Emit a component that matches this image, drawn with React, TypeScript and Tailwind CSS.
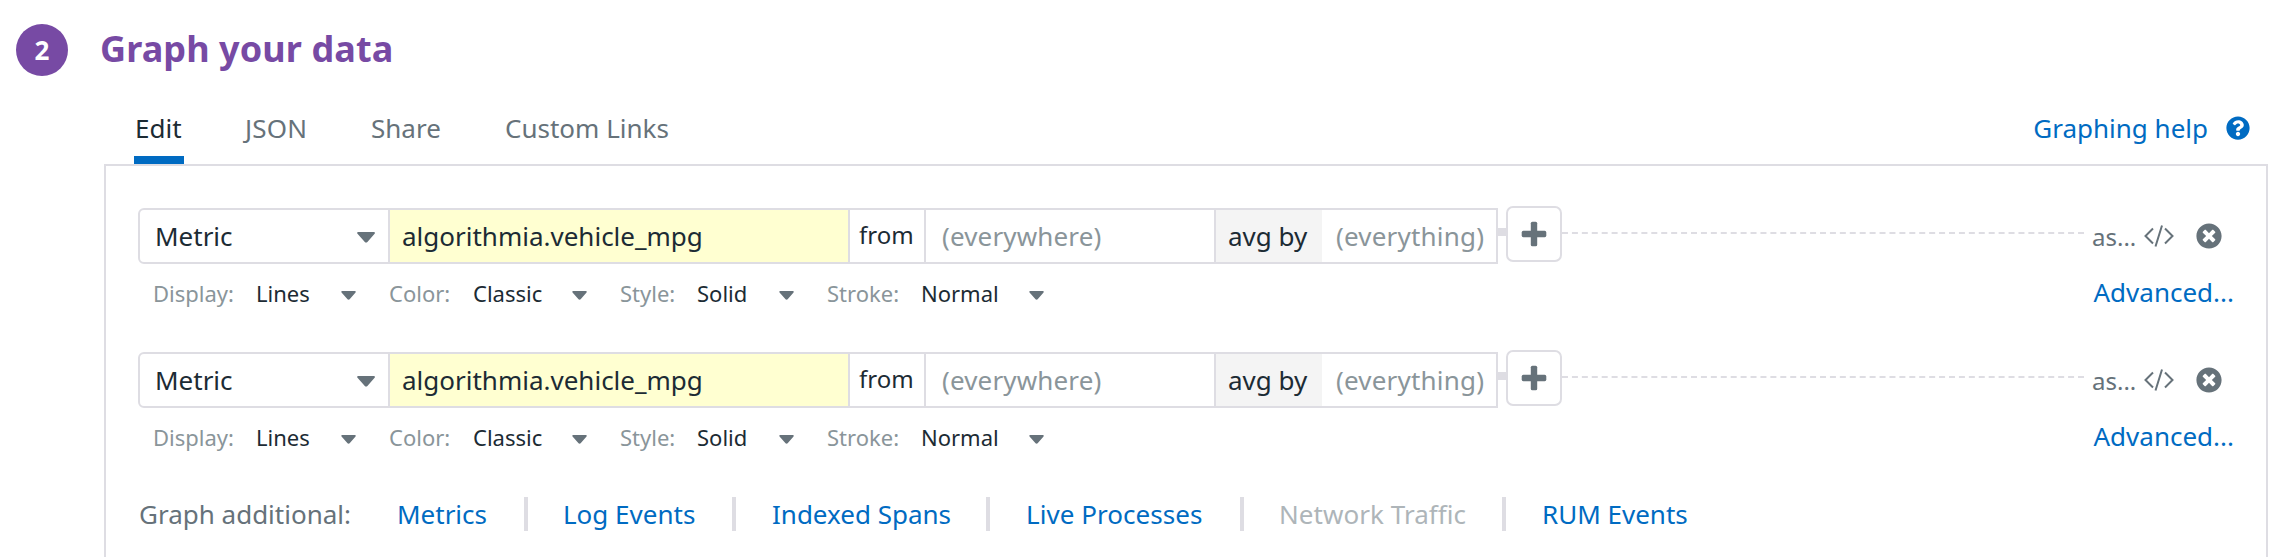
import { FaQuestionCircle, FaTimesCircle } from "react-icons/fa";

function Caret({ className }: { className: string }) {
  return (
    <svg viewBox="0 0 18 11" className={`shrink-0 text-[#66727a] ${className}`} fill="currentColor">
      <path d="M1.2 0h15.6c1 0 1.5 1.1.8 1.8l-7.2 8.2c-.7.8-1.9.8-2.6 0L.5 1.8C-.2 1.1.3 0 1.2 0z" />
    </svg>
  );
}

function Option({ label, value, labelClass, valueClass }: { label: string; value: string; labelClass: string; valueClass: string }) {
  return (
    <div className="flex items-center">
      <span className={`shrink-0 text-[#8a959a] ${labelClass}`}>{label}</span>
      <span className={`shrink-0 ${valueClass}`}>{value}</span>
      <Caret className="mt-[3px] h-[9px] w-[15px]" />
    </div>
  );
}

function Query() {
  return (
    <div className="h-[144px]">
      <div className="flex h-[58px] items-start">
        <div className="mt-[2px] flex h-[56px] w-[1360px] shrink-0 rounded-l-[6px] border-2 border-[#dedde3] leading-[52px]">
          <div className="flex w-[250px] shrink-0 items-center justify-between border-r-2 border-[#dedde3] pr-[13px] pl-[14px]">
            <span className="pl-px">Metric</span>
            <Caret className="mt-[2px] h-[11px] w-[18px]" />
          </div>
          <div className="w-[460px] shrink-0 border-r-2 border-[#dedde3] bg-[#ffffd1] pl-[12px]">algorithmia.vehicle_mpg</div>
          <div className="w-[76px] shrink-0 border-r-2 border-[#dedde3] pl-[9px] text-[24px] leading-[50px]">from</div>
          <div className="w-[290px] shrink-0 border-r-2 border-[#dedde3] pl-[16px] tracking-[0.15px] text-[#8a959a]">(everywhere)</div>
          <div className="w-[106px] shrink-0 bg-[#f4f4f4] pl-[12px]">avg by</div>
          <div className="pl-[14px] tracking-[0.2px] text-[#8a959a]">(everything)</div>
        </div>
        <div className="mt-[22px] h-[8px] w-[8px] shrink-0 bg-[#dedde3]" />
        <button className="flex h-[56px] w-[56px] shrink-0 items-center justify-center rounded-[7px] border-2 border-[#dedde3]">
          <svg viewBox="0 0 26 26" className="h-[26px] w-[26px]" fill="#66727a">
            <rect x="0.7" y="9.8" width="24.6" height="6.4" rx="1.6" />
            <rect x="9.8" y="0.7" width="6.4" height="24.6" rx="1.6" />
          </svg>
        </button>
        <div className="mt-[26px] w-[522px] shrink-0 border-t-2 border-dashed border-[#dedde3]" />
        <span className="ml-[8px] w-[52px] shrink-0 text-[24px] leading-[62px] text-[#66727a]">as...</span>
        <svg viewBox="0 0 30 22" className="mt-[19px] h-[22px] w-[30px] shrink-0" fill="none" stroke="#66727a" strokeWidth="2">
          <path d="M9 3.5 1.5 11 9 18.5M21 3.5l7.5 7.5-7.5 7.5M18 .5 11.5 21.5" />
        </svg>
        <FaTimesCircle className="mt-[17px] ml-[22px] h-[26px] w-[26px] shrink-0 text-[#66727a]" />
      </div>
      <div className="flex h-[57px] items-center justify-between pr-[32px] pl-[15px]">
        <div className="flex gap-[33px] pt-[2px] text-[22px]">
          <Option label="Display:" value="Lines" labelClass="w-[103px]" valueClass="w-[85px]" />
          <Option label="Color:" value="Classic" labelClass="w-[84px]" valueClass="w-[99px]" />
          <Option label="Style:" value="Solid" labelClass="w-[77px]" valueClass="w-[82px]" />
          <Option label="Stroke:" value="Normal" labelClass="w-[94px]" valueClass="w-[108px]" />
        </div>
        <a className="text-[#006bc2]">Advanced...</a>
      </div>
    </div>
  );
}

const sep = "h-[34px] w-[4px] shrink-0 bg-[#dedde3]";

export default function App() {
  return (
    <div className="h-[557px] w-[2290px] overflow-hidden bg-white font-['Noto_Sans',sans-serif] text-[26px] text-[#1c2b34]">
      <header className="flex h-[100px] items-center gap-[32px] pl-[16px]">
        <div className="flex h-[52px] w-[52px] items-center justify-center rounded-full bg-[#774aa4] text-[26px] font-bold text-white">2</div>
        <h1 className="pb-[3px] text-[36px] font-bold tracking-[0.1px] text-[#774aa4]">Graph your data</h1>
      </header>
      <nav className="ml-[104px] flex h-[64px] w-[2164px] items-start pl-[30px] leading-[56px] text-[#66727a]">
        <div className="h-[64px] w-[50px] shrink-0 border-b-8 border-[#006bc2] pl-px text-[#1c2b34]">Edit</div>
        <div className="w-[127px] shrink-0 pl-[61px] tracking-[0.2px]">JSON</div>
        <div className="ml-[60px] w-[134px] shrink-0">Share</div>
        <div className="grow">Custom Links</div>
        <div className="flex items-center text-[#006bc2]">
          <span>Graphing help</span>
          <FaQuestionCircle className="mr-[18px] ml-[18px] h-[24px] w-[24px]" />
        </div>
      </nav>
      <main className="ml-[104px] h-[440px] w-[2164px] border-2 border-[#dedde3] pt-[40px] pl-[32px]">
        <Query />
        <Query />
        <div className="flex h-[40px] items-center text-[#006bc2]">
          <span className="w-[259px] shrink-0 pl-px text-[#66727a]">Graph additional:</span>
          <span className="w-[127px] shrink-0">Metrics</span>
          <i className={sep} />
          <span className="w-[204px] shrink-0 pl-[35px]">Log Events</span>
          <i className={sep} />
          <span className="w-[250px] shrink-0 pl-[36px]">Indexed Spans</span>
          <i className={sep} />
          <span className="w-[250px] shrink-0 pl-[36px] tracking-[0.05px]">Live Processes</span>
          <i className={sep} />
          <span className="w-[258px] shrink-0 pl-[35px] tracking-[0.05px] text-[#aeb5b9]">Network Traffic</span>
          <i className={sep} />
          <span className="pl-[36px]">RUM Events</span>
        </div>
      </main>
    </div>
  );
}
